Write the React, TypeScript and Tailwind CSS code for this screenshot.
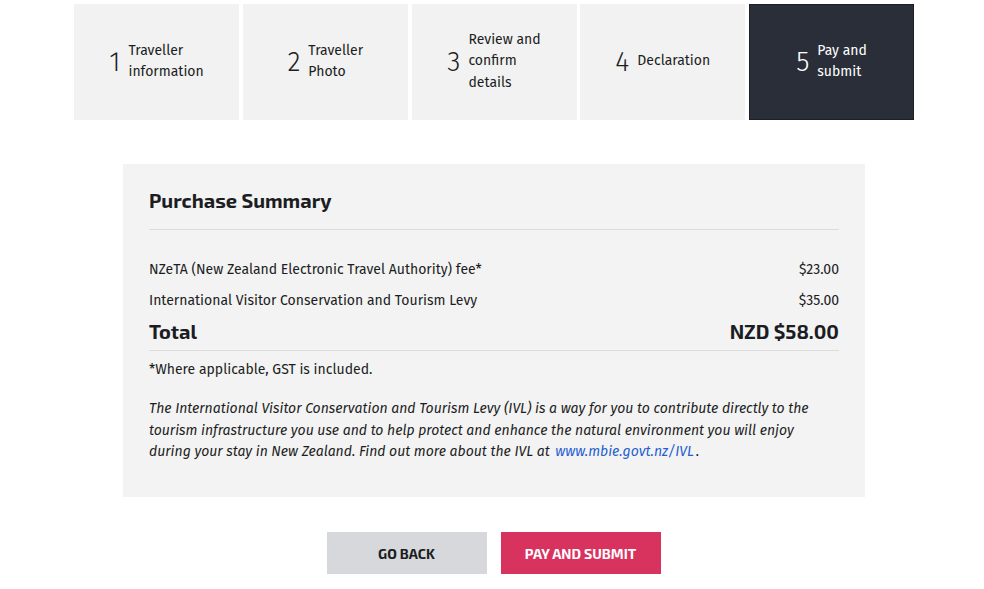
import React from "react";

const steps = [
  { n: "1", label: ["Traveller", "information"] },
  { n: "2", label: ["Traveller", "Photo"] },
  { n: "3", label: ["Review and", "confirm", "details"] },
  { n: "4", label: ["Declaration"] },
  { n: "5", label: ["Pay and", "submit"], active: true },
];

const body = { fontFamily: '"Fira Sans", "Open Sans", "Noto Sans", sans-serif' };
const heading = { fontFamily: '"Exo 2", "Noto Sans", "Open Sans", sans-serif' };

export default function App() {
  return (
    <div className="w-[984px] h-[589px] bg-white text-[#1b1d22]" style={body}>
      {/* Progress steps */}
      <div className="pt-1 pl-[74px]">
        <div className="grid grid-cols-5 gap-[3.75px] w-[840px]">
          {steps.map((s) => (
            <div
              key={s.n}
              className={
                "h-[116px] flex items-center justify-center gap-2 " +
                (s.active ? "bg-[#2a2e38] text-white border border-[#1c1f25]" : "bg-[#f2f2f2] text-[#1b1d22]")
              }
            >
              <span className="text-[27px] font-light leading-none">{s.n}</span>
              <span className="text-[14px] leading-[21.5px] -mt-[2px]">
                {s.label.map((l) => (
                  <span key={l} className="block">{l}</span>
                ))}
              </span>
            </div>
          ))}
        </div>
      </div>

      {/* Purchase summary */}
      <div className="mt-11 ml-[123px] w-[742px] h-[333px] bg-[#f3f3f3] px-[26px] pt-[23px]">
        <h2 className="text-[20px] font-bold leading-[26px] pb-[16px] border-b border-[#dcdcdc]" style={heading}>
          Purchase Summary
        </h2>
        <div className="mt-[30px] text-[14px] leading-[20px]">
          <div className="flex justify-between">
            <span>NZeTA (New Zealand Electronic Travel Authority) fee*</span>
            <span>$23.00</span>
          </div>
          <div className="flex justify-between mt-[11px]">
            <span>International Visitor Conservation and Tourism Levy</span>
            <span>$35.00</span>
          </div>
          <div
            className="flex justify-between text-[20px] font-bold leading-[26px] mt-[7px] pb-[6px] border-b border-[#dcdcdc]"
            style={heading}
          >
            <span>Total</span>
            <span>NZD $58.00</span>
          </div>
          <p className="mt-[9px]">*Where applicable, GST is included.</p>
          <p className="italic mt-[18px] leading-[21.5px]">
            The International Visitor Conservation and Tourism Levy (IVL) is a way for you to contribute directly to the
            tourism infrastructure you use and to help protect and enhance the natural environment you will enjoy during
            your stay in New Zealand. Find out more about the IVL at{" "}
            <a className="text-[#1f5fd1] ml-[2px] mr-[2px]">www.mbie.govt.nz/IVL</a>.
          </p>
        </div>
      </div>

      {/* Actions */}
      <div className="mt-[35px] flex justify-center gap-[14px] pl-[3px]">
        <button className="w-[160px] h-[42px] bg-[#d6d8dc] text-[14px] font-bold uppercase text-[#1b1d22]" style={heading}>
          Go back
        </button>
        <button className="w-[160px] h-[42px] bg-[#d8335f] text-[14px] font-bold uppercase text-white" style={heading}>
          Pay and submit
        </button>
      </div>
    </div>
  );
}
